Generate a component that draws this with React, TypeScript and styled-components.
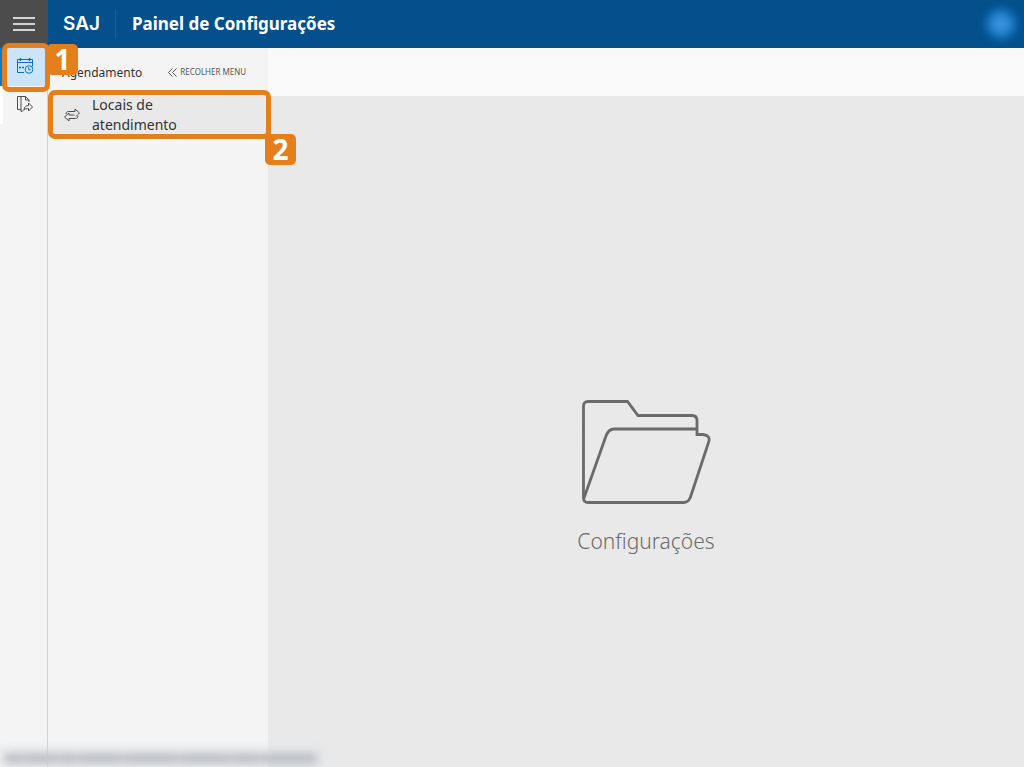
import React from "react";
import styled, { createGlobalStyle } from "styled-components";

const GlobalStyle = createGlobalStyle`
  *, *::before, *::after { box-sizing: border-box; }
  body { margin: 0; font-family: "Noto Sans", "Open Sans", sans-serif; color: #333; background: #e9e9e9; }
  button { font: inherit; color: inherit; border: 0; background: none; padding: 0; cursor: pointer; }
  h1, h2, p, ul { margin: 0; padding: 0; }
  ul { list-style: none; }
  svg { display: block; flex: none; }
`;

const Page = styled.div`
  position: relative;
  min-height: 100vh;
  display: flex;
  flex-direction: column;
  overflow: hidden;
`;

const Header = styled.header`
  height: 48px;
  display: flex;
  align-items: center;
  background: #03508c;
  color: #fff;
`;

const MenuButton = styled.button`
  width: 48px;
  height: 48px;
  display: grid;
  place-items: center;
  background: #4c4c4c;
`;

const Logo = styled.span`
  width: 68px;
  height: 30px;
  padding-left: 15px;
  border-right: 1px solid #0a62a8;
  font: 600 19px/30px Inter, sans-serif;
`;

const Title = styled.h1`
  flex: 1;
  padding-left: 16px;
  font-size: 17px;
  line-height: 24px;
  font-weight: 700;
`;

const Avatar = styled.button`
  width: 30px;
  height: 30px;
  margin-right: 8px;
  border-radius: 50%;
  background: radial-gradient(circle, #489cde 10%, #0c72c6 75%);
  filter: blur(5px);
`;

const Body = styled.div`
  flex: 1;
  display: flex;
`;

const Rail = styled.nav`
  width: 48px;
  background: #f4f4f4;
  border-right: 1px solid #d2d2d2;
`;

const RailButton = styled.button<{ $active?: boolean }>`
  width: 100%;
  height: 38px;
  padding-bottom: 2px;
  display: grid;
  place-items: center;
  border-left: 3px solid ${(p) => (p.$active ? "#0b78d0" : "#fff")};
  background: ${(p) => (p.$active ? "#cce4f7" : "transparent")};
  color: ${(p) => (p.$active ? "#0b70c4" : "#4c4c4c")};
`;

const SideMenu = styled.aside`
  width: 220px;
  background: #f4f4f4;
`;

const MenuHeader = styled.div`
  height: 48px;
  padding-left: 14px;
  display: flex;
  align-items: center;
  gap: 26px;
`;

const MenuTitle = styled.h2`
  padding-top: 2px;
  font-size: 12px;
  line-height: 16px;
  font-weight: 400;
`;

const Collapse = styled.button`
  display: flex;
  align-items: center;
  gap: 3px;
  && { font-size: 8px; line-height: 16px; color: #555; }
`;

const MenuItem = styled.button`
  width: 100%;
  height: 38px;
  padding: 0 60px 0 16px;
  display: flex;
  align-items: center;
  gap: 12px;
  && { background: #e9e9e9; text-align: left; font-size: 14px; line-height: 20px; font-weight: 400; }
`;

const Content = styled.main`
  flex: 1;
  display: flex;
  flex-direction: column;
`;

const Toolbar = styled.div`
  height: 48px;
  background: #f9f9f9;
`;

const Empty = styled.section`
  flex: 1;
  display: flex;
  flex-direction: column;
  align-items: center;
  justify-content: center;
  gap: 20px;
  padding-top: 92px;
  color: #6b6b6b;
`;

const EmptyLabel = styled.p`
  font-size: 21px;
  line-height: 32px;
  font-weight: 300;
`;

const Highlight = styled.div<{ $x: number; $y: number; $w: number; $h: number }>`
  position: absolute;
  left: ${(p) => p.$x}px;
  top: ${(p) => p.$y}px;
  width: ${(p) => p.$w}px;
  height: ${(p) => p.$h}px;
  border: 5px solid #e47f1b;
  border-radius: 7px;
  pointer-events: none;
`;

const Step = styled.span<{ $x: number; $y: number }>`
  position: absolute;
  left: ${(p) => p.$x}px;
  top: ${(p) => p.$y}px;
  width: 31px;
  height: 31px;
  border-radius: 5px;
  background: #e47f1b;
  color: #fff;
  text-align: center;
  font: 700 28px/31px "Open Sans", sans-serif;
`;

const StatusBar = styled.div`
  position: absolute;
  left: 0;
  bottom: 0;
  width: 322px;
  height: 18px;
  padding: 4px 6px;
  display: flex;
  align-items: center;
  gap: 2px;
  background: #dee1e6;
  filter: blur(4px);
`;

const StatusPart = styled.i<{ $grow: number }>`
  flex: ${(p) => p.$grow};
  height: 9px;
  background: #b8bcc1;
`;

const CalendarIcon = () => (
  <svg width="18" height="18" viewBox="0 0 18 18" fill="none" stroke="currentColor">
    <path d="M8 15.5H1.500v-13h15v7M1.500 5.500h15" />
    <path d="M4.500 1v3M13.500 1v3" strokeWidth="1.500" />
    <path d="M3 10.500h2M6 10.500h2" strokeWidth="1.600" />
    <circle cx="13" cy="12.500" r="3.800" />
    <path d="M12.700 10.300v2.400h2" />
  </svg>
);

const ExportIcon = () => (
  <svg width="18" height="18" viewBox="0 0 18 18" fill="none" stroke="currentColor">
    <path d="M5 14.500H1.500v-13H5M5 1.500h4.500L13 5v2M9.500 1.500V5H13M5 1.500v15l2.500-1" />
    <path d="M8 15c0-3 2-4.500 4.500-4.500V8l4 4-4 4v-2.500C10.500 13.500 9 14 8 15Z" strokeLinejoin="round" />
  </svg>
);

const SwapIcon = () => (
  <svg width="16" height="16" viewBox="0 0 16 16" fill="none" stroke="#4c4c4c" strokeLinejoin="round">
    <path d="M2 7c0-1.500.8-2.500 2.500-2.500H11V2l4.500 4L12 9.500" />
    <path d="M14 9c0 1.500-.8 2.500-2.500 2.500H5V14L.5 10 5 6v2h5.500" />
  </svg>
);

const FolderIcon = () => (
  <svg width="130" height="106" viewBox="0 0 130 106" fill="none" stroke="#6b6b6b" strokeWidth="2.800">
    <path d="M2.500 99V7q0-4.500 4.500-4.500h39.500L57 16.500h54q5 0 5 5v14h6q8 1 5.500 8L109.500 98q-2 5.500-7 5.500H7q-4.500 0-4.500-4.500" />
    <path d="M3 99 25 37q2.500-7 8-7h83" />
  </svg>
);

export default function App() {
  return (
    <Page>
      <GlobalStyle />
      <Header>
        <MenuButton aria-label="Menu">
          <svg width="22" height="14" viewBox="0 0 22 14" stroke="#fff" strokeWidth="1.500">
            <path d="M0 1h22M0 7h22M0 13h22" />
          </svg>
        </MenuButton>
        <Logo>SAJ</Logo>
        <Title>Painel de Configurações</Title>
        <Avatar aria-label="Perfil" />
      </Header>
      <Body>
        <Rail>
          <RailButton $active aria-label="Agendamento"><CalendarIcon /></RailButton>
          <RailButton aria-label="Exportar"><ExportIcon /></RailButton>
        </Rail>
        <SideMenu>
          <MenuHeader>
            <MenuTitle>Agendamento</MenuTitle>
            <Collapse>
              <svg width="9" height="9" viewBox="0 0 9 9" fill="none" stroke="#555">
                <path d="M4.500.5l-4 4 4 4M8.500.5l-4 4 4 4" />
              </svg>
              RECOLHER MENU
            </Collapse>
          </MenuHeader>
          <ul>
            <li>
              <MenuItem><SwapIcon /><span>Locais de atendimento</span></MenuItem>
            </li>
          </ul>
        </SideMenu>
        <Content>
          <Toolbar />
          <Empty>
            <FolderIcon />
            <EmptyLabel>Configurações</EmptyLabel>
          </Empty>
        </Content>
      </Body>
      <Highlight $x={2} $y={43} $w={48} $h={49} />
      <Step $x={47} $y={44}>1</Step>
      <Highlight $x={48} $y={90} $w={223} $h={49} />
      <Step $x={265} $y={134}>2</Step>
      <StatusBar aria-hidden="true">
        {[3, 6, 3, 8, 10, 9, 5, 10].map((grow, i) => <StatusPart key={i} $grow={grow} />)}
      </StatusBar>
    </Page>
  );
}
